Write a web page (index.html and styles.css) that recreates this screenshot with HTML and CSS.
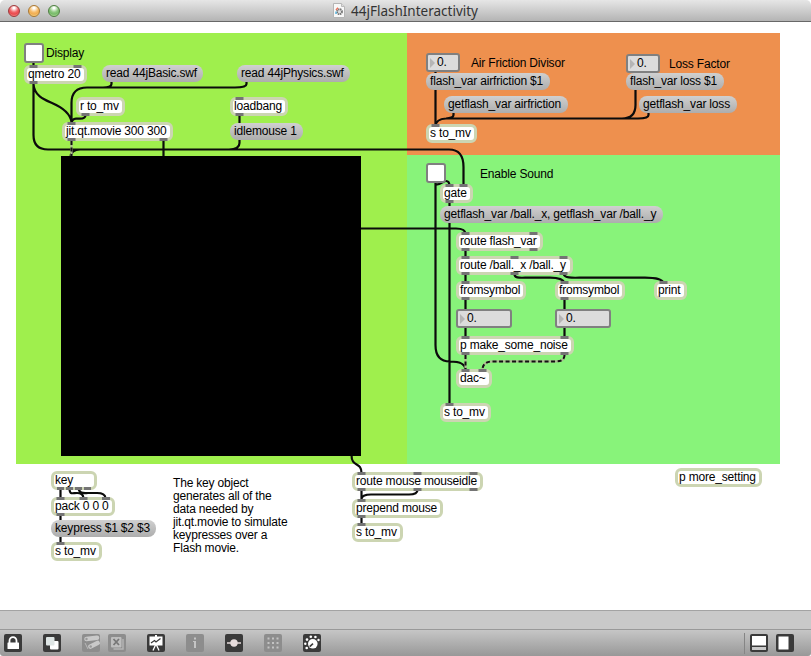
FILE: index.html
```
<!DOCTYPE html>
<html lang="en">
<head>
<meta charset="utf-8">
<title>44jFlashInteractivity</title>
<link rel="stylesheet" href="styles.css">
</head>
<body>
<div class="window">
  <header class="titlebar">
    <div class="lights"><i class="light close"></i><i class="light minimize"></i><i class="light zoom"></i></div>
    <div class="title">
      <svg class="doc" width="12" height="15" viewBox="0 0 12 15"><path d="M.5.5H8.5L11.500 3.500V14.500H.5Z" fill="#f8f8f8" stroke="#b5b5b5"/><path d="M8.500.5V3.500H11.500" fill="#ddd" stroke="#bbb"/><circle cx="6.500" cy="8.700" r="2.500" fill="#ddd" stroke="#777" stroke-width="1.800" stroke-dasharray="1.400 .6"/><path d="M3 7L5 4.700" stroke="#e8705a" stroke-width="1.500"/><path d="M3 8.500V11" stroke="#5bb7e0" stroke-width="1.500"/></svg>
      <h1>44jFlashInteractivity</h1>
    </div>
  </header>
  <main class="patcher">
    <div class="panel lime"></div>
    <div class="panel orange"></div>
    <div class="panel green"></div>
    <svg class="cords" width="811" height="656" viewBox="0 0 811 656">
      <path d="M33.500 62V66M33.500 84C34 96 45 100 52 103S70 112 71.500 122M33.500 84V135Q33.500 149.500 48 149.500H449Q463.500 149.500 463.500 167V186
        M111.500 81V84Q111.500 87.500 103 87.500H87Q71.500 87.500 71.500 103V122M246.500 81V84Q246.500 87.500 235 87.500H103
        M85.500 115Q85.500 118.700 80 118.700H76Q72 119 71.500 123M163.500 140V157M239.500 115V124M239.500 139V143Q239.500 149.500 229 149.500H80Q71 150 70.500 157
        M435.500 71V74M435.500 89V125M453.500 112V115Q453.500 118 446 118.500M635.500 89V105Q635.500 118.500 622 118.500H446Q436 119 435.500 126M648.500 112V115Q648.500 118.500 638 118.500H620
        M435.500 182V345Q435.500 361.500 450 361.500Q465.500 361.500 465.500 370M435.500 184.500C441 185 443 181 446 181Q449.500 181 449.500 186M449.500 202V207M449.500 222V404
        M360 228.500H456Q465.500 228.500 465.500 234M465.500 250V257M465.500 274V282M465.500 299V310M465.500 327V337M564.500 299V310M564.500 327V337
        M514.500 274C514.500 279 521 277.600 530 277.600H550Q563 277.600 564.500 283M563.500 274C565 279 575 277.600 585 277.600H645Q662 277.600 663.500 283
        M60.500 488V498M69.500 488C69.500 495 72 493 77 493Q83 493 83.500 498M78.500 488C79 494 84 493 88 493H97Q105 493 105.500 498M60.500 515V521M60.500 536V543
        M351.500 455C351.500 468 361.500 461 361.500 473M361.500 490V500M417.500 490Q417.500 494.500 409 494.500H371Q362 494.500 361.500 499M361.500 517V524"/>
      <path class="matrix" d="M71.500 141V157M465.500 355V370M564.500 355Q564.500 361.400 556 361.400H493Q482.500 361.400 482.500 370"/>
      <path class="dash" d="M71.500 141V157M465.500 355V370M564.500 355Q564.500 361.400 556 361.400H493Q482.500 361.400 482.500 370"/>
    </svg>
    <div class="movie"></div>

    <div class="node toggle display"></div>
    <div class="node note t-display">Display</div>
    <div class="node obj qmetro">qmetro 20</div>
    <div class="node msg basic">read 44jBasic.swf</div>
    <div class="node msg physics">read 44jPhysics.swf</div>
    <div class="node obj receive">r to_mv</div>
    <div class="node obj jit">jit.qt.movie 300 300</div>
    <div class="node obj loadbang">loadbang</div>
    <div class="node msg idle">idlemouse 1</div>

    <div class="node num air-value">0.</div>
    <div class="node note t-air">Air Friction Divisor</div>
    <div class="node msg air-set">flash_var airfriction $1</div>
    <div class="node msg air-get">getflash_var airfriction</div>
    <div class="node obj air-send">s to_mv</div>
    <div class="node num loss-value">0.</div>
    <div class="node note t-loss">Loss Factor</div>
    <div class="node msg loss-set">flash_var loss $1</div>
    <div class="node msg loss-get">getflash_var loss</div>

    <div class="node toggle sound"></div>
    <div class="node note t-sound">Enable Sound</div>
    <div class="node obj gate">gate</div>
    <div class="node msg ball-get">getflash_var /ball._x, getflash_var /ball._y</div>
    <div class="node obj route-var">route flash_var</div>
    <div class="node obj route-ball">route /ball._x /ball._y</div>
    <div class="node obj symbol-x">fromsymbol</div>
    <div class="node obj symbol-y">fromsymbol</div>
    <div class="node obj print">print</div>
    <div class="node num wide x-value">0.</div>
    <div class="node num wide y-value">0.</div>
    <div class="node obj noise">p make_some_noise</div>
    <div class="node obj dac">dac~</div>
    <div class="node obj ball-send">s to_mv</div>

    <div class="node obj key">key</div>
    <div class="node obj pack">pack 0 0 0</div>
    <div class="node msg keypress">keypress $1 $2 $3</div>
    <div class="node obj key-send">s to_mv</div>
    <div class="node note t-key">The key object<br>generates all of the<br>data needed by<br>jit.qt.movie to simulate<br>keypresses over a<br>Flash movie.</div>
    <div class="node obj route-mouse">route mouse mouseidle</div>
    <div class="node obj prepend">prepend mouse</div>
    <div class="node obj mouse-send">s to_mv</div>
    <div class="node obj more">p more_setting</div>

    <svg class="ports" width="811" height="656" viewBox="0 0 811 656">
      <path d="M29.500 66.500h8M73.500 66.500h8M29.500 82.500h8M81.500 114.500h8M67.500 123.500h8M67.500 139.500h8M159.500 139.500h8M235.500 98.500h8M235.500 114.500h8
        M431.500 125.500h8M445.500 185.500h8M459.500 185.500h8M445.500 201.500h8M461.500 233.500h8M529.500 233.500h8M461.500 249.500h8M529.500 249.500h8
        M461.500 257.500h8M510.500 257.500h8M559.500 257.500h8M461.500 273.500h8M510.500 273.500h8M559.500 273.500h8
        M461.500 282.500h8M560.500 282.500h8M659.500 282.500h8M461.500 298.500h8M560.500 298.500h8M461.500 337.500h8M560.500 337.500h8M461.500 353.500h8M560.500 353.500h8
        M461.500 370.500h8M478.500 370.500h8M445.500 404.500h8M57 488.500h7M66 488.500h7M75 488.500h7M84 488.500h7M56.500 498.500h8M79.500 498.500h8M102 498.500h8M56.500 514.500h8M56.500 543.500h8
        M357.500 473.500h8M413.500 473.500h8M469.500 473.500h8M357.500 489.500h8M413.500 489.500h8M469.500 489.500h8M357.500 500.500h8M357.500 516.500h8M357.500 524.500h8"/>
    </svg>
  </main>
  <div class="status"></div>
  <footer class="toolbar">
    <svg class="icon" viewBox="0 0 18 18"><rect width="18" height="18" rx="2"/><path d="M5.500 9V6.700a3.500 3.500 0 0 1 7 0V9" fill="none" stroke="#fff" stroke-width="1.800"/><rect x="3.500" y="8.500" width="11.500" height="6.500" rx=".5" fill="#fff"/></svg>
    <svg class="icon" viewBox="0 0 18 18"><rect width="18" height="18" rx="2"/><rect x="7" y="7" width="8.500" height="8.500" rx="1" fill="#fff"/><rect x="3" y="3" width="8.500" height="8.500" rx="1" fill="#dfe6e5"/></svg>
    <div class="pair">
      <svg class="icon dim" viewBox="0 0 18 18"><rect width="18" height="18" rx="2"/><g stroke="#c9c9c9" stroke-width="4.600" stroke-linecap="round"><path d="M4.500 5L15 3.800"/><path d="M8.500 12.500L15.500 9"/></g><circle cx="4.500" cy="5" r="1.200" fill="#999"/><circle cx="8.700" cy="12.500" r="1.200" fill="#999"/><path d="M3 9L6 15" stroke="#b8b8b8"/></svg>
      <svg class="icon dim" viewBox="0 0 18 18"><rect width="18" height="18" rx="2"/><path d="M5.500 15H15V5" fill="none" stroke="#b5b5b5" stroke-width="1.500"/><rect x="3" y="3" width="10.500" height="10.500" rx="1" fill="#bebebe"/><path d="M5.500 5L11 11M11 5L5.500 11" stroke="#777" stroke-width="1.800"/></svg>
    </div>
    <svg class="icon" viewBox="0 0 18 18"><rect width="18" height="18" rx="2"/><path d="M2.500 2.500H15.500V11.500H2.500ZM8 1H10V3H8Z" fill="#fff"/><path d="M4 9L7.500 6.500L9 8L13.500 4.500" fill="none" stroke="#3a3a3a" stroke-width="1.300"/><path d="M8.500 11L6 16.500M9.500 11L12 16.500" stroke="#fff" stroke-width="1.300"/></svg>
    <svg class="icon dim" viewBox="0 0 18 18"><rect width="18" height="18" rx="2"/><path d="M8 3.500H10V5.500H8ZM7 7H10V14H8V8H7Z" fill="#c5c5c5"/></svg>
    <svg class="icon" viewBox="0 0 18 18"><rect width="18" height="18" rx="2"/><path d="M2 9H16" stroke="#e7dddd" stroke-width="1.600"/><circle cx="9" cy="9" r="3.700" fill="#e7dddd"/></svg>
    <svg class="icon dim" viewBox="0 0 18 18"><rect width="18" height="18" rx="2"/><path d="M3.500 4.500H14.500M3.500 9H14.500M3.500 13.500H14.500" stroke="#c3c3c3" stroke-width="2" stroke-dasharray="2 2.500"/></svg>
    <svg class="icon" viewBox="0 0 18 18"><rect width="18" height="18" rx="2"/><circle cx="9.800" cy="9.800" r="4.800" fill="#fff"/><path d="M10 9.700L6.700 12.700" stroke="#3a3a3a" stroke-width="1.600"/><g fill="#fff"><circle cx="3.700" cy="14" r="1.300"/><circle cx="2.300" cy="9.800" r="1.200"/><circle cx="4" cy="5.600" r="1.300"/><circle cx="7.800" cy="2.700" r="1.300"/><circle cx="12.400" cy="3" r="1.300"/><circle cx="15.500" cy="6" r="1.200"/></g></svg>
    <div class="views">
      <svg class="icon" viewBox="0 0 18 18"><rect width="18" height="18" rx="2"/><path d="M2 2H16V11.500H2Z" fill="#fff"/><path d="M2 13H16V16H2Z" fill="#c9c9c9"/></svg>
      <svg class="icon" viewBox="0 0 18 18"><rect width="18" height="18" rx="2"/><path d="M2.500 2.500H12.500V15.500H2.500Z" fill="#fff"/></svg>
    </div>
  </footer>
</div>
</body>
</html>
```
FILE: styles.css
```
* { box-sizing: border-box; }
body { margin: 0; background: #fff; }

.window {
  position: relative;
  display: flex;
  flex-direction: column;
  width: 811px;
  height: 656px;
  overflow: hidden;
  border-radius: 5px 5px 3px 3px;
  font: 12px/13px "Liberation Sans", Arial, sans-serif;
  color: #000;
}

/* Window chrome */
.titlebar {
  display: grid;
  grid-template-columns: 1fr auto 1fr;
  align-items: center;
  height: 22px;
  padding: 0 8px;
  border-bottom: 1px solid #686868;
  background: linear-gradient(#e6e6e6, #b4b4b4);
}
.lights { display: flex; gap: 8px; }
.light {
  width: 12px;
  height: 12px;
  border: 1px solid;
  border-radius: 50%;
}
.close { border-color: #9d3a3c; background: radial-gradient(circle at 50% 20%, #fff 0 8%, #f0676a 45%, #e9484c 65%, #ffb0a8); }
.minimize { border-color: #a87732; background: radial-gradient(circle at 50% 20%, #fff 0 8%, #f7bd6b 45%, #f0ac50 65%, #fff0a8); }
.zoom { border-color: #4d7d40; background: radial-gradient(circle at 50% 20%, #fff 0 8%, #8fc981 45%, #76b968 65%, #d3f5b8); }
.title { display: flex; align-items: center; gap: 6px; }
.title h1 {
  margin: 0;
  font: 13.5px/20px "Noto Sans", "Open Sans", sans-serif;
  color: #333;
}

.patcher { flex: 1; background: #fff; }
.status { height: 19px; border-top: 1px solid #a3a3a3; background: #c9c9c9; }
.toolbar {
  display: flex;
  align-items: center;
  gap: 21px;
  height: 27px;
  padding: 0 17px 0 4px;
  border-top: 1px solid #999;
  background: linear-gradient(#c6c6c6, #989898);
}
.icon { display: block; width: 18px; height: 18px; fill: #3a3a3a; }
.dim { fill: #8d8d8d; }
.pair { display: flex; gap: 8px; }
.views {
  display: flex;
  align-items: center;
  gap: 8px;
  height: 21px;
  margin-left: auto;
  padding-left: 5px;
  border-left: 1px solid #858585;
}

/* Free canvas: every patch item carries its own place */
.panel, .movie, .node, .cords, .ports { position: absolute; }
.cords, .ports { left: 0; top: 0; fill: none; pointer-events: none; }
.cords { stroke: #0b0b0b; stroke-width: 2.2; }
.cords .matrix { stroke: #aeb893; stroke-width: 2.2; }
.cords .dash { stroke: #111; stroke-width: 2; stroke-dasharray: 4 2.5; }
.ports { stroke: #747474; stroke-width: 3; stroke-linecap: butt; }
.lime { left: 16px; top: 33px; width: 391px; height: 431px; background: #9fef4d; }
.orange { left: 407px; top: 33px; width: 373px; height: 122px; background: #ee904e; }
.green { left: 407px; top: 155px; width: 373px; height: 309px; background: #88f37a; }
.movie { left: 61px; top: 156px; width: 300px; height: 300px; background: #000; }

.node { white-space: nowrap; letter-spacing: -0.18px; }
.obj {
  height: 19px;
  padding: 0 1px;
  border: 3px solid #ccd5b2;
  border-radius: 6px;
  background: #fff;
}
.msg {
  height: 17px;
  padding: 2px 4px;
  border-radius: 8px;
  background: linear-gradient(#d0d0d0, #adadad);
}
.num {
  width: 34px;
  height: 19px;
  padding: 1px 0 0 9px;
  border: 2px solid #808080;
  border-radius: 3px;
  background: #dcdcdc;
}
.num::before {
  content: "";
  position: absolute;
  left: 2px;
  top: 3px;
  border: solid transparent;
  border-width: 5px 0 5px 5px;
  border-left-color: #b5b5b5;
}
.wide { width: 56px; }
.toggle { width: 20px; height: 20px; border: 2px solid #808080; border-radius: 3px; background: #fff; }

.display { left: 24px; top: 43px; }
.t-display { left: 46px; top: 47px; }
.qmetro { left: 24px; top: 65px; width: 63px; }
.basic { left: 102px; top: 65px; width: 101px; }
.physics { left: 237px; top: 65px; width: 113px; }
.receive { left: 76px; top: 97px; width: 49px; }
.jit { left: 62px; top: 122px; width: 111px; }
.loadbang { left: 230px; top: 97px; width: 58px; }
.idle { left: 230px; top: 123px; width: 73px; }

.air-value { left: 426px; top: 53px; }
.t-air { left: 471px; top: 57px; }
.air-set { left: 426px; top: 73px; width: 124px; }
.air-get { left: 444px; top: 96px; width: 124px; }
.air-send { left: 426px; top: 124px; width: 51px; }
.loss-value { left: 626px; top: 54px; }
.t-loss { left: 669px; top: 58px; }
.loss-set { left: 626px; top: 73px; width: 98px; }
.loss-get { left: 639px; top: 96px; width: 98px; }

.sound { left: 426px; top: 163px; }
.t-sound { left: 480px; top: 168px; }
.gate { left: 440px; top: 184px; width: 33px; }
.ball-get { left: 440px; top: 206px; width: 223px; }
.route-var { left: 456px; top: 232px; width: 87px; }
.route-ball { left: 456px; top: 256px; width: 117px; }
.symbol-x { left: 456px; top: 281px; width: 70px; }
.symbol-y { left: 555px; top: 281px; width: 70px; }
.print { left: 654px; top: 281px; width: 33px; }
.x-value { left: 456px; top: 309px; }
.y-value { left: 555px; top: 309px; }
.noise { left: 456px; top: 336px; width: 118px; }
.dac { left: 456px; top: 369px; width: 36px; }
.ball-send { left: 440px; top: 403px; width: 51px; }

.key { left: 51px; top: 471px; width: 46px; }
.pack { left: 51px; top: 497px; width: 64px; }
.keypress { left: 51px; top: 520px; width: 105px; }
.key-send { left: 51px; top: 542px; width: 51px; }
.t-key { left: 173px; top: 477px; }
.route-mouse { left: 352px; top: 472px; width: 131px; }
.prepend { left: 352px; top: 499px; width: 91px; }
.mouse-send { left: 352px; top: 523px; width: 51px; }
.more { left: 675px; top: 468px; width: 87px; }
```
